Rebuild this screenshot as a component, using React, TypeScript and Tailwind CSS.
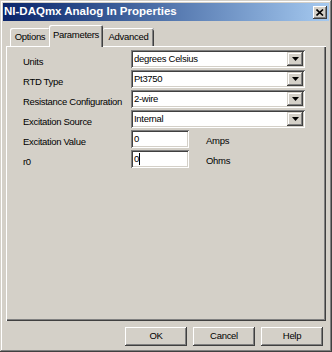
const font = { fontFamily: '"Liberation Sans", Arial, sans-serif' };

function DropArrow() {
  return (
    <div className="w-[16px] h-[14px] mr-[1px] bg-[#d4d0c8] shadow-[inset_-1px_-1px_#404040,inset_1px_1px_#d4d0c8,inset_-2px_-2px_#808080,inset_2px_2px_#ffffff] flex items-center justify-center">
      <svg width="7" height="4" viewBox="0 0 7 4">
        <path d="M0 0h7L3.5 4z" fill="#000" />
      </svg>
    </div>
  );
}

function Combo({ value }: { value: string }) {
  return (
    <div className="w-[174px] h-[18px] bg-white shadow-[inset_1px_1px_#808080,inset_-1px_-1px_#ffffff,inset_2px_2px_#404040,inset_-2px_-2px_#d4d0c8] flex items-center pl-[3px] pr-[1px]">
      <span className="flex-1 text-black truncate">{value}</span>
      <DropArrow />
    </div>
  );
}

function TextBox({ value, caret }: { value: string; caret?: boolean }) {
  return (
    <div className="w-[58px] h-[18px] bg-white shadow-[inset_1px_1px_#808080,inset_-1px_-1px_#ffffff,inset_2px_2px_#404040,inset_-2px_-2px_#d4d0c8] flex items-center pl-[3px]">
      <span className="text-black">{value}</span>
      {caret && <span className="w-px h-[12px] bg-black" />}
    </div>
  );
}

function Row({ label, children }: { label: string; children: React.ReactNode }) {
  return (
    <div className="flex items-start h-[20px]">
      <div className="w-[108px] pt-[7px] leading-none whitespace-nowrap">{label}</div>
      {children}
    </div>
  );
}

function Button({ label }: { label: string }) {
  return (
    <div className="w-[62px] h-[19px] bg-[#d4d0c8] shadow-[inset_-1px_-1px_#404040,inset_1px_1px_#ffffff,inset_-2px_-2px_#808080,inset_2px_2px_#d4d0c8] flex items-center justify-center">
      {label}
    </div>
  );
}

export default function App() {
  return (
    <div
      style={font}
      className="w-[332px] h-[352px] bg-[#d4d0c8] p-[3px] flex flex-col text-[9.5px] tracking-[-0.3px] text-black shadow-[inset_-1px_-1px_#404040,inset_1px_1px_#d4d0c8,inset_-2px_-2px_#808080,inset_2px_2px_#ffffff]"
    >
      {/* title bar */}
      <div className="h-[18px] flex items-center pl-[1px] pr-[2px] bg-gradient-to-r from-[#0a246a] to-[#a6caf0]">
        <span className="flex-1 text-white font-bold text-[11.5px] tracking-normal">NI-DAQmx Analog In Properties</span>
        <div className="w-[14px] h-[13px] bg-[#d4d0c8] shadow-[inset_-1px_-1px_#404040,inset_1px_1px_#ffffff,inset_-2px_-2px_#808080] flex items-center justify-center">
          <svg width="8" height="7" viewBox="0 0 8 7">
            <path d="M0.5 0.5L7 6.5M7 0.5L0.5 6.5" stroke="#000" strokeWidth="1.6" />
          </svg>
        </div>
      </div>

      {/* tabs */}
      <div className="flex items-end h-[22px] mt-[3px] pl-[7px]">
        <div className="h-[18px] w-[40px] flex items-center justify-center shadow-[inset_1px_1px_#ffffff,inset_-1px_0_#808080] rounded-t-[2px]">
          Options
        </div>
        <div className="h-[22px] w-[54px] -ml-[1px] pb-[2px] flex items-center justify-center bg-[#d4d0c8] shadow-[inset_1px_1px_#ffffff,inset_-1px_0_#404040,inset_-2px_0_#808080] rounded-t-[2px] relative z-10 -mb-[1px]">
          Parameters
        </div>
        <div className="h-[18px] w-[51px] flex items-center justify-center shadow-[inset_0_1px_#ffffff,inset_-1px_0_#404040,inset_-2px_0_#808080] rounded-t-[2px]">
          Advanced
        </div>
      </div>

      {/* tab panel */}
      <div className="h-[275px] mx-[3px] pt-[4px] pl-[17px] shadow-[inset_1px_1px_#ffffff,inset_-1px_-1px_#404040,inset_-2px_-2px_#808080] flex flex-col">
        <Row label="Units">
          <Combo value="degrees Celsius" />
        </Row>
        <Row label="RTD Type">
          <Combo value="Pt3750" />
        </Row>
        <Row label="Resistance Configuration">
          <Combo value="2-wire" />
        </Row>
        <Row label="Excitation Source">
          <Combo value="Internal" />
        </Row>
        <Row label="Excitation Value">
          <TextBox value="0" />
          <div className="pl-[17px] pt-[6px] leading-none">Amps</div>
        </Row>
        <Row label="r0">
          <TextBox value="0" caret />
          <div className="pl-[17px] pt-[6px] leading-none">Ohms</div>
        </Row>
      </div>

      {/* buttons */}
      <div className="flex justify-end gap-[6px] mt-[6px] pr-[6px]">
        <Button label="OK" />
        <Button label="Cancel" />
        <Button label="Help" />
      </div>
    </div>
  );
}
